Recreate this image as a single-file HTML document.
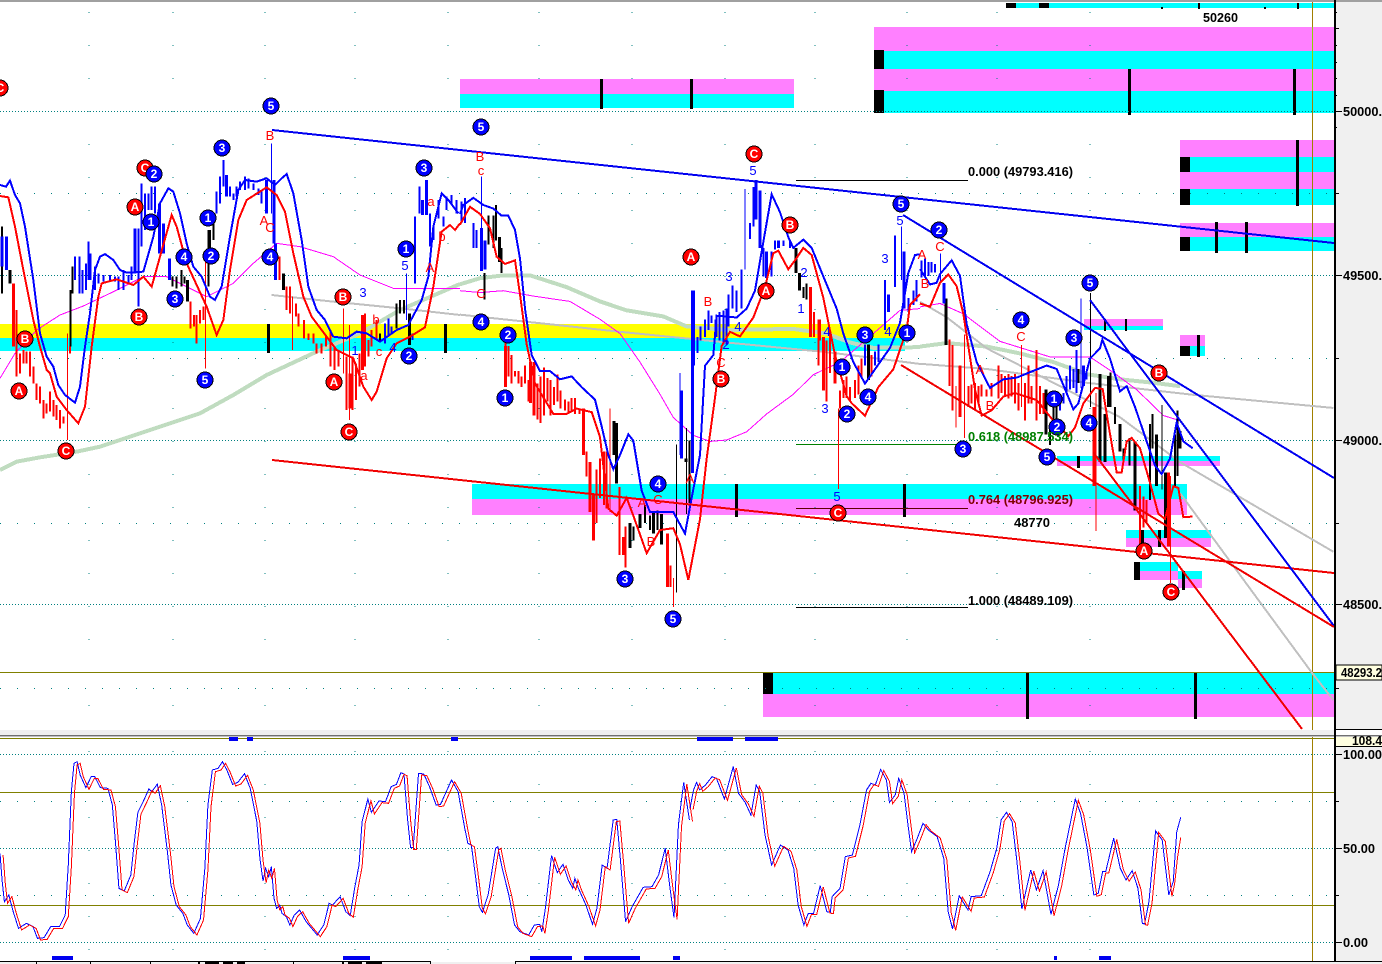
<!DOCTYPE html>
<html>
<head>
<meta charset="utf-8">
<style>
html,body{margin:0;padding:0;background:#fff;width:1382px;height:964px;overflow:hidden}
svg{display:block;position:absolute;left:0;top:0}
text{font-family:"Liberation Sans",sans-serif;font-weight:bold;font-size:13px}
.w text{fill:#fff;font-size:12px;text-anchor:middle}
.r circle{fill:#f00;stroke:#000;stroke-width:1}
.b circle{fill:#00f;stroke:#000;stroke-width:1}
.ls text{text-anchor:middle;font-size:13px;font-weight:normal}
.ns *{vector-effect:non-scaling-stroke;fill:none}
polyline.sl{vector-effect:non-scaling-stroke;fill:none}
</style>
</head>
<body>
<svg width="1382" height="964" viewBox="0 0 1382 964" shape-rendering="crispEdges">
<defs>
<polyline id="s1" class="sl" points="0,385 5,470 10,530 20,510 30,560 42,610 60,595 75,605 85,640 100,638 115,605 135,605 148,570 155,420 162,200 168,115 175,110 182,150 195,188 207,155 215,155 228,188 245,190 255,240 262,350 270,490 282,498 297,450 305,350 313,262 325,230 338,192 345,200 357,177 367,240 380,380 388,480 400,540 415,565 425,600 440,625 455,580 465,430 472,240 482,135 495,130 505,110 515,135 528,178 540,172 555,146 568,190 583,290 590,400 597,468 603,430 610,455 616,425 622,520 628,550 635,540 640,565 650,575 658,600 668,570 680,555 695,590 720,630 735,600 747,535 755,540 772,515 785,560 795,572 805,490 815,420 822,290 835,222 843,262 860,228 875,230 888,185 900,178 910,143 917,147 925,280 932,368 938,368 950,145 962,147 975,185 990,240 1000,238 1025,165 1040,200 1055,310 1062,355 1070,360 1080,460 1088,545 1095,562 1108,510 1125,370 1130,365 1140,430 1155,510 1168,600 1180,620 1200,630 1213,600 1225,598 1230,620 1238,550 1252,392 1265,443 1278,418 1290,465 1300,490 1305,460 1313,490 1330,540 1345,598 1355,550 1367,420 1378,430 1392,285 1400,283 1408,400 1420,590 1435,545 1460,487 1480,485 1495,450 1510,370 1520,480 1530,578 1540,300 1552,172 1565,285"/>
<polyline id="s2" class="sl" points="0,250 8,195 15,172 22,195 35,180 50,155 60,160 78,222 98,125 110,205 125,232 138,270 150,180 158,200 170,330 185,420 205,360 222,375 235,430 245,540 258,600 268,565 280,565 295,482 310,560 318,562 322,515 340,490 352,395 368,390 385,300 400,195 410,175 420,180 432,133 445,165 452,232 465,210 473,160 485,205 495,310 502,380 515,340 528,295 540,315 560,335 575,400 585,560 595,612 610,512 630,555 637,515 660,512 680,440 695,370 705,285 717,262 730,290 740,400 752,552 772,435 785,495 800,437 818,568 835,480 850,370 873,222 885,265 900,370 915,510 925,505 935,440 942,440 960,340 975,430 988,465 1002,437 1015,490 1025,595 1030,597 1040,530 1055,318 1070,345 1085,510"/>
</defs>

<!-- axis column -->
<rect x="1335" y="0" width="47" height="964" fill="#f0f0f0"/>

<!-- bands -->
<g>
<rect x="1006" y="3" width="328" height="5" fill="#0ff"/>
<rect x="1006" y="3" width="10" height="5" fill="#000"/><rect x="1039" y="3" width="10" height="5" fill="#000"/>
<rect x="1198" y="3" width="2" height="6" fill="#000"/><rect x="1297" y="3" width="2" height="6" fill="#000"/>
<rect x="1161" y="7" width="2" height="2" fill="#000"/><rect x="1264" y="7" width="2" height="2" fill="#000"/>

<rect x="874" y="27" width="460" height="24" fill="#ff80ff"/>
<rect x="874" y="51" width="460" height="18" fill="#0ff"/>
<rect x="874" y="69" width="460" height="22" fill="#ff80ff"/>
<rect x="874" y="91" width="460" height="22" fill="#0ff"/>
<rect x="874" y="50" width="10" height="19" fill="#000"/><rect x="874" y="90" width="10" height="23" fill="#000"/>
<rect x="1128" y="69" width="3" height="46" fill="#000"/><rect x="1293" y="69" width="3" height="46" fill="#000"/>

<rect x="460" y="79" width="334" height="15" fill="#ff80ff"/>
<rect x="460" y="94" width="334" height="14" fill="#0ff"/>
<rect x="600" y="79" width="3" height="30" fill="#000"/><rect x="690" y="79" width="3" height="30" fill="#000"/>

<rect x="1180" y="140" width="154" height="17" fill="#ff80ff"/>
<rect x="1180" y="157" width="154" height="15" fill="#0ff"/>
<rect x="1180" y="172" width="154" height="17" fill="#ff80ff"/>
<rect x="1180" y="189" width="154" height="16" fill="#0ff"/>
<rect x="1180" y="157" width="10" height="15" fill="#000"/><rect x="1180" y="189" width="10" height="16" fill="#000"/>
<rect x="1296" y="140" width="3" height="66" fill="#000"/>

<rect x="1180" y="223" width="154" height="14" fill="#ff80ff"/>
<rect x="1180" y="237" width="154" height="14" fill="#0ff"/>
<rect x="1180" y="237" width="10" height="14" fill="#000"/>
<rect x="1215" y="222" width="3" height="31" fill="#000"/><rect x="1245" y="222" width="3" height="31" fill="#000"/>

<rect x="0" y="324" width="905" height="14" fill="#ff0"/>
<rect x="0" y="338" width="905" height="13" fill="#0ff"/>
<rect x="267" y="324" width="3" height="29" fill="#000"/><rect x="444" y="324" width="3" height="29" fill="#000"/>

<rect x="1084" y="319" width="79" height="7" fill="#ff80ff"/>
<rect x="1084" y="326" width="79" height="4" fill="#0ff"/>
<rect x="1104" y="319" width="2" height="12" fill="#000"/><rect x="1125" y="319" width="2" height="12" fill="#000"/>

<rect x="1180" y="335" width="25" height="11" fill="#ff80ff"/>
<rect x="1180" y="346" width="25" height="10" fill="#0ff"/>
<rect x="1180" y="346" width="10" height="10" fill="#000"/>
<rect x="1197" y="335" width="3" height="22" fill="#000"/>

<rect x="472" y="484" width="715" height="15" fill="#0ff"/>
<rect x="472" y="499" width="715" height="16" fill="#ff80ff"/>
<rect x="735" y="484" width="3" height="33" fill="#000"/><rect x="903" y="484" width="3" height="33" fill="#000"/>

<rect x="1057" y="456" width="163" height="5" fill="#0ff"/>
<rect x="1057" y="461" width="163" height="5" fill="#ff80ff"/>
<rect x="1077" y="456" width="3" height="12" fill="#000"/>

<rect x="1126" y="530" width="85" height="8" fill="#0ff"/>
<rect x="1126" y="538" width="85" height="9" fill="#ff80ff"/>
<rect x="1141" y="530" width="3" height="17" fill="#000"/><rect x="1158" y="530" width="3" height="17" fill="#000"/>

<rect x="1137" y="562" width="41" height="9" fill="#0ff"/>
<rect x="1137" y="571" width="41" height="9" fill="#ff80ff"/>
<rect x="1178" y="571" width="24" height="8" fill="#0ff"/>
<rect x="1178" y="579" width="24" height="9" fill="#ff80ff"/>
<rect x="1134" y="562" width="6" height="18" fill="#000"/>
<rect x="1182" y="571" width="3" height="19" fill="#000"/>

<rect x="763" y="673" width="571" height="21" fill="#0ff"/>
<rect x="763" y="694" width="571" height="23" fill="#ff80ff"/>
<rect x="763" y="673" width="10" height="21" fill="#000"/>
<rect x="1026" y="673" width="3" height="46" fill="#000"/><rect x="1194" y="673" width="3" height="46" fill="#000"/>
</g>

<!-- grid -->
<g stroke="#008080" stroke-width="1" fill="none">
<path stroke-dasharray="1 2" d="M0 111.5H1334M0 275.5H1334M0 440.5H1334M0 604.5H1334M0 754.5H1334M0 848.5H1334M0 942.5H1334"/>
<path stroke-dasharray="1 16" d="M0 193.5H1334M0 358.5H1334M0 523.5H1334M0 688.5H1334M0 801.5H1334M0 895.5H1334"/>
<path stroke-dasharray="1 32" d="M89 12V730M173 12V730M265 12V730M355 12V730M448 12V730M539 12V730M632 12V730M725 12V730M815 12V730M907 12V730M997 12V730M1090 12V730M89 751V955M173 751V955M265 751V955M355 751V955M448 751V955M539 751V955M632 751V955M725 751V955M815 751V955M907 751V955M997 751V955M1090 751V955"/>
</g>

<!-- olive lines -->
<g fill="#808000">
<rect x="0" y="672" width="1334" height="1"/>
<rect x="0" y="738" width="1334" height="1"/>
<rect x="0" y="792" width="1334" height="1"/>
<rect x="0" y="905" width="1334" height="1"/>
<rect x="1312" y="0" width="1" height="961" fill="#a08000"/>
<rect x="1312" y="27" width="1" height="64" fill="#90d000"/>
</g>

<!-- fib lines -->
<g fill="none" stroke-width="1">
<path stroke="#000" d="M796 180.5H968M796 607.5H968"/>
<path stroke="#008000" d="M796 444.5H963"/>
<path stroke="#600000" d="M796 508.5H968"/>
</g>

<!-- ZOOM 1 segment -->
<g transform="translate(0,80) scale(0.33333,0.33333)" class="ns">
<polyline stroke="#c0dcc0" stroke-width="4" points="0,1170 50,1145 120,1132 230,1115 300,1100 450,1050 600,1000 700,945 800,885 950,815 1080,760 1200,690 1380,612"/>
<polyline stroke="#c0c0c0" stroke-width="2" points="815,645 1000,665 1200,685 1380,705"/>
<polyline stroke="#ff00ff" stroke-width="1" points="0,895 45,820 110,750 180,705 250,678 330,640 430,590 500,590 560,620 620,650 700,610 760,550 830,490 900,500 1000,530 1080,585 1180,625 1380,625"/>
<path stroke="#000" stroke-width="2" d="M6 440V640M212 630V800M218 560V640M518 590V620M530 590V625M545 570V620M553 590V610M625 450V620M630 450V530M640 410V480M1140 760V785M1190 670V745M1200 660V700M1212 660V700"/>
<path stroke="#000" stroke-width="3" d="M30 570V610M562 600V665M850 580V630M1228 700V795"/>
<path stroke="#00f" stroke-width="2" d="M225 530V600M238 530V640M248 570V640M258 550V630M265 485V600M272 520V600M285 560V630M295 580V610M310 585V605M330 585V605M345 590V605M355 590V630M370 570V630M385 585V610M395 560V600M415 445V680M425 310V500M435 340V450M445 340V390M455 320V390M465 320V400M650 335V400M660 290V370M670 240V320M690 320V350M700 340V360M710 320V350M720 305V330M735 290V330M745 295V325M760 310V330M775 325V345M785 330V370M1155 730V790M1165 715V770M1175 740V760M1238 760V780M1245 410V610M1258 320V400M1290 400V500M1300 440V480M1315 360V415M1330 410V440M1340 350V390M1355 345V375M1370 360V400"/>
<path stroke="#00f" stroke-width="1" d="M815 190V400M1219 580V720"/>
<path stroke="#00f" stroke-width="3" d="M6 470V560M20 470V570M405 445V580M478 370V520M490 430V520M508 535V600M680 285V350M800 300V400M822 300V490M826 490V600M1268 360V405M1280 300V405"/>
<path stroke="#f00" stroke-width="2" d="M50 690V890M60 820V880M70 810V850M80 815V850M90 815V890M100 860V910M110 910V960M120 920V970M130 960V1015M140 970V1000M150 935V995M160 960V1010M170 975V1020M180 990V1045M190 1010V1030M210 800V820M572 665V745M582 705V740M590 705V790M600 690V730M610 680V720M838 530V600M860 620V690M870 620V700M888 670V710M895 700V740M912 720V775M925 760V780M940 760V790M950 790V820M965 790V820M978 770V800M992 750V860M1003 800V870M1015 810V860M1040 830V990M1058 830V990M1068 850V960M1078 820V920M1095 700V860M1105 780V830M1115 750V800M1130 720V780"/>
<path stroke="#f00" stroke-width="1" d="M203 760V1080M617 540V865M878 650V810M1030 685V880M1048 735V1020"/>
<path stroke="#f00" stroke-width="3" d="M40 610V800M1088 705V870M1050 880V985"/>
<polyline stroke="#00f" stroke-width="2" points="0,315 18,320 30,302 45,345 60,370 75,440 100,600 120,760 140,830 160,860 175,915 195,945 225,968 240,920 255,800 270,700 285,570 300,530 315,522 340,540 360,570 380,578 430,575 460,470 480,370 505,325 520,335 540,400 560,490 580,560 605,590 630,650 645,660 665,620 690,470 715,330 735,300 770,305 800,295 825,315 845,295 860,282 880,340 905,480 925,620 950,690 975,720 1000,770 1040,775 1070,755 1100,760 1140,785 1190,750 1225,735 1265,660 1285,590 1300,440 1325,340 1345,360 1375,400"/>
<polyline stroke="#f00" stroke-width="2" points="0,348 25,352 45,440 70,570 100,720 120,800 140,870 150,880 170,950 200,990 235,1030 255,980 275,800 295,650 305,610 350,598 400,615 430,590 455,620 480,530 515,405 530,440 560,550 590,615 620,680 650,765 670,720 690,570 715,420 740,360 800,322 830,345 855,395 880,520 910,650 935,710 980,770 1010,810 1060,835 1090,920 1115,960 1130,935 1160,835 1190,790 1230,770 1275,742 1300,620 1325,455 1350,435 1365,450 1380,430"/>
</g>

<!-- ZOOM 2 segment -->
<g transform="translate(460,80) scale(0.33333,0.35714)" class="ns">
<polyline stroke="#c0dcc0" stroke-width="4" points="0,572 60,555 130,547 210,547 320,580 420,620 500,645 610,662 680,690 800,700 1000,697 1100,710 1170,735 1240,750 1380,748"/>
<polyline stroke="#c0c0c0" stroke-width="2" points="0,657 180,675 480,705 800,735 1100,762 1380,795"/>
<polyline stroke="#ff00ff" stroke-width="1" points="0,590 60,595 130,590 220,605 330,620 420,670 480,710 540,790 600,880 640,945 700,995 750,1012 800,1008 860,985 920,935 1000,880 1060,825 1140,790 1240,710 1320,645 1380,640"/>
<path stroke="#000" stroke-width="2" d="M73 540V615M85 380V460M100 380V470M108 350V450M125 470V540M520 1250V1290M555 1190V1240M570 1220V1260M592 1205V1260M688 1010V1185M1030 580V610M1040 570V615"/>
<path stroke="#000" stroke-width="1" d="M650 1020V1435M680 975V1215"/>
<path stroke="#000" stroke-width="3" d="M118 440V510M462 955V1050M470 960V1130M510 1240V1310M540 1215V1255M580 1210V1270M605 1215V1300M678 1060V1070M1008 470V540M1018 540V590M1225 740V840"/>
<path stroke="#00f" stroke-width="2" d="M5 340V400M15 330V400M40 400V470M50 420V470M702 590V800M712 720V765M722 690V730M735 670V720M745 645V700M755 660V680M778 650V730M790 645V740M800 640V740M805 600V690M818 575V640M830 590V650M845 530V640M870 400V445M880 300V410M910 470V550M935 480V550M945 450V475M970 450V465M990 450V470M1215 740V800M1245 760V800M1255 740V790M1275 560V700M1305 435V580M1345 610V650M1360 590V630M1370 560V620"/>
<path stroke="#00f" stroke-width="1" d="M65 270V535M660 820V1050M855 305V530M1325 410V560"/>
<path stroke="#00f" stroke-width="3" d="M65 415V535M75 450V530M665 870V1060M697 590V1100M768 670V720M888 280V390M900 310V470M920 480V555M955 450V470M1285 600V650M1332 480V640"/>
<path stroke="#f00" stroke-width="2" d="M137 720V860M145 745V830M155 770V850M165 815V830M175 815V850M185 830V860M195 800V850M205 840V900M232 850V950M242 830V960M252 805V940M262 835V900M272 840V940M282 860V910M292 825V900M302 870V920M315 895V925M325 900V930M335 890V925M345 890V935M358 920V935M380 1040V1110M410 1090V1240M420 1060V1170M432 1040V1190M440 1040V1200M478 1140V1330M497 1250V1365M632 1360V1420M1062 650V720M1075 670V800M1080 670V730M1100 730V900M1110 700V820M1140 870V920M1150 840V890M1160 830V890M1170 860V900M1185 840V890M1195 800V880M1205 780V830M1235 770V830"/>
<path stroke="#f00" stroke-width="1" d="M450 920V1210M640 1395V1475M1135 920V1145"/>
<path stroke="#f00" stroke-width="3" d="M137 745V860M212 790V905M222 790V940M370 920V1050M390 1070V1210M400 1160V1290M490 1280V1330M622 1270V1420M1052 580V720M1090 720V870M1125 760V850"/>
<polyline stroke="#00f" stroke-width="2" points="0,375 10,350 40,330 70,350 100,360 125,380 145,380 165,420 180,500 195,640 215,770 240,815 270,815 300,838 335,830 365,860 405,895 425,970 445,1050 460,1090 480,1050 505,992 520,1010 545,1150 570,1210 610,1210 640,1210 675,1270 695,1170 720,1050 735,800 760,770 770,660 830,665 860,640 885,590 905,480 935,320 960,370 985,440 1000,470 1030,447 1055,470 1090,550 1130,640 1150,710 1180,790 1215,850 1290,750 1320,680 1345,540 1365,490 1380,488"/>
<polyline stroke="#f00" stroke-width="2" points="0,405 30,355 60,375 90,415 110,495 135,515 165,505 180,600 200,740 225,850 280,935 320,935 350,920 395,930 420,1000 445,1200 470,1220 500,1170 520,1220 560,1325 600,1260 640,1255 660,1300 685,1400 720,1230 740,1060 765,890 785,745 810,705 840,718 880,665 915,580 940,485 955,478 985,530 1005,505 1030,470 1055,490 1090,610 1125,770 1160,885 1175,905 1215,940 1255,860 1300,810 1340,700 1350,630 1380,600"/>
</g>

<!-- ZOOM 3 segment -->
<g transform="translate(920,200) scale(0.33333,0.34483)" class="ns">
<polyline stroke="#c0dcc0" stroke-width="4" points="0,425 80,415 200,425 300,445 400,470 500,505 600,520 700,530 780,540"/>
<polyline stroke="#c0c0c0" stroke-width="2" points="0,475 200,490 500,530 820,565 1240,603"/>
<polyline stroke="#c0c0c0" stroke-width="2" points="0,295 80,340 200,430 420,540 600,630 780,760 1240,1020"/>
<polyline stroke="#c0c0c0" stroke-width="2" points="780,850 1000,1140 1175,1370 1240,1450"/>
<polyline stroke="#ff00ff" stroke-width="1" points="0,310 60,300 130,330 240,410 390,455 510,455 580,500 650,550 730,625 780,640"/>
<path stroke="#000" stroke-width="2" d="M390 650V710M400 590V680M410 580V660M475 490V530M572 500V600M585 600V650M610 720V760M628 690V770M690 650V870M698 620V720M765 680V830M773 610V800"/>
<path stroke="#000" stroke-width="1" d="M512 270V600M726 595V840"/>
<path stroke="#000" stroke-width="3" d="M78 285V420M378 550V680M540 505V760M555 620V760M565 510V600M600 650V730M645 700V900M710 680V830M736 790V980M780 670V720"/>
<path stroke="#00f" stroke-width="2" d="M5 175V225M15 170V220M25 180V220M35 180V210M45 185V210M420 580V610M430 560V590M440 510V560M450 480V550M460 490V545M470 435V560M500 500V520"/>
<path stroke="#00f" stroke-width="1" d="M62 155V240M483 285V545"/>
<path stroke="#00f" stroke-width="3" d="M72 240V300M490 480V540"/>
<path stroke="#f00" stroke-width="2" d="M88 405V540M98 420V610M145 540V600M155 535V590M165 530V610M175 540V590M185 535V570M200 550V570M215 530V570M235 480V575M245 505V560M255 510V570M265 505V575M275 510V570M285 505V590M295 530V610M315 530V640M325 480V590M335 540V590M350 435V640M360 540V620M370 560V620M660 830V1000M670 860V950M680 870V935"/>
<path stroke="#f00" stroke-width="1" d="M108 540V660M133 390V690M305 420V600M528 560V960M752 800V1110"/>
<path stroke="#f00" stroke-width="3" d="M120 480V630M522 600V830M745 790V1005"/>
<polyline stroke="#00f" stroke-width="2" points="0,200 30,245 50,240 60,215 95,175 120,220 140,360 170,470 210,545 250,520 290,515 380,480 410,490 440,560 460,607 475,590 510,460 540,430 547,405 570,460 600,555 620,540 645,600 680,700 705,770 725,795 750,750 770,645 790,700 818,720"/>
<polyline stroke="#f00" stroke-width="2" points="0,300 30,310 60,240 85,216 110,250 130,330 165,550 185,625 215,610 250,570 285,560 350,580 400,640 445,685 465,660 490,590 525,545 548,548 565,650 590,790 605,790 620,700 635,690 660,720 690,820 715,910 735,925 760,830 775,835 790,920 818,918"/>
</g>

<!-- trend lines -->
<g fill="none" stroke-width="2">
<path stroke="#0000f0" d="M272 130L1334 243"/>
<path stroke="#f00000" d="M272 460L1334 573"/>
<path stroke="#0000f0" d="M903 215L1334 478"/>
<path stroke="#0000f0" d="M1090 300L1334 626"/>
<path stroke="#f00000" d="M901 365L1334 627"/>
<path stroke="#f00000" d="M1093 452L1302 729"/>
</g>

<!-- stochastic -->
<g transform="translate(0,725) scale(0.44053,0.33333)">
<use href="#s1" stroke="#00f" stroke-width="1"/>
<use href="#s1" transform="translate(7,5)" stroke="#f00" stroke-width="1"/>
</g>
<g transform="translate(690,725) scale(0.44131,0.33333)">
<use href="#s2" stroke="#00f" stroke-width="1"/>
<polyline class="sl" stroke="#00f" stroke-width="1" points="1085,510 1095,470 1103,320 1112,277"/>
<use href="#s2" transform="translate(7,4)" stroke="#f00" stroke-width="1"/>
<polyline class="sl" stroke="#f00" stroke-width="1" points="1092,514 1098,478 1105,395 1112,337"/>
</g>

<!-- small blue bars -->
<g fill="#0000f0">
<rect x="229" y="737" width="9" height="4"/><rect x="247" y="737" width="6" height="4"/><rect x="451" y="737" width="7" height="4"/><rect x="697" y="737" width="36" height="4"/><rect x="745" y="737" width="33" height="4"/>
<rect x="52" y="956" width="21" height="4"/><rect x="343" y="956" width="27" height="4"/><rect x="530" y="956" width="42" height="4"/><rect x="584" y="956" width="56" height="4"/><rect x="673" y="956" width="7" height="4"/><rect x="1054" y="956" width="3" height="4"/><rect x="1099" y="956" width="12" height="4"/>
</g>

<!-- divider -->
<rect x="0" y="0" width="1382" height="2" fill="#a0a0a0"/>
<rect x="0" y="730" width="1334" height="5" fill="#f0f0f0"/>
<rect x="0" y="735" width="1382" height="1" fill="#707070"/>
<rect x="0" y="736" width="1382" height="1" fill="#c0c0c0"/>

<!-- axis frame -->
<rect x="1334" y="0" width="2" height="964" fill="#000"/>
<rect x="1334" y="729" width="48" height="1" fill="#000"/>
<g fill="#000">
<rect x="1336" y="111" width="6" height="1"/><rect x="1336" y="275" width="6" height="1"/><rect x="1336" y="440" width="6" height="1"/><rect x="1336" y="604" width="6" height="1"/>
<rect x="1336" y="754" width="6" height="1"/><rect x="1336" y="848" width="6" height="1"/><rect x="1336" y="942" width="6" height="1"/>
<rect x="1336" y="28" width="3" height="1"/><rect x="1336" y="193" width="3" height="1"/><rect x="1336" y="358" width="3" height="1"/><rect x="1336" y="523" width="3" height="1"/><rect x="1336" y="688" width="3" height="1"/><rect x="1336" y="801" width="3" height="1"/><rect x="1336" y="895" width="3" height="1"/>
<rect x="1336" y="12" width="1" height="1"/><rect x="1336" y="45" width="1" height="1"/><rect x="1336" y="62" width="1" height="1"/><rect x="1336" y="78" width="1" height="1"/><rect x="1336" y="95" width="1" height="1"/><rect x="1336" y="127" width="1" height="1"/>
</g>
<rect x="1336" y="665" width="46" height="15" fill="#ffffe0" stroke="#000" stroke-width="1"/>
<rect x="1336" y="737" width="46" height="9" fill="#ffffe0"/>
<rect x="1336" y="746" width="46" height="1" fill="#000"/>

<!-- bottom time axis -->
<rect x="0" y="962" width="1382" height="2" fill="#f0f0f0"/>
<g fill="#000">
<rect x="0" y="961" width="430" height="1"/><rect x="515" y="961" width="867" height="1"/>
<rect x="36" y="961" width="1" height="3"/><rect x="90" y="961" width="1" height="3"/><rect x="150" y="961" width="1" height="3"/><rect x="293" y="961" width="1" height="3"/><rect x="430" y="961" width="1" height="3"/><rect x="515" y="961" width="1" height="3"/>
<rect x="198" y="962" width="2" height="2"/><rect x="205" y="962" width="14" height="2"/><rect x="223" y="962" width="10" height="2"/><rect x="237" y="962" width="8" height="2"/>
<rect x="342" y="962" width="2" height="2"/><rect x="348" y="962" width="14" height="2"/><rect x="366" y="962" width="16" height="2"/>
</g>

<!-- red circles -->
<g class="w r">
<g><circle cx="0" cy="88" r="8"/><text x="0" y="92">C</text></g>
<g><circle cx="19" cy="391" r="8"/><text x="19" y="395">A</text></g>
<g><circle cx="25" cy="339" r="8"/><text x="25" y="343">B</text></g>
<g><circle cx="66" cy="451" r="8"/><text x="66" y="455">C</text></g>
<g><circle cx="139" cy="317" r="8"/><text x="139" y="321">B</text></g>
<g><circle cx="135" cy="207" r="8"/><text x="135" y="211">A</text></g>
<g><circle cx="145" cy="168" r="8"/><text x="145" y="172">C</text></g>
<g><circle cx="343" cy="297" r="8"/><text x="343" y="301">B</text></g>
<g><circle cx="334" cy="382" r="8"/><text x="334" y="386">A</text></g>
<g><circle cx="349" cy="432" r="8"/><text x="349" y="436">C</text></g>
<g><circle cx="691" cy="257" r="8"/><text x="691" y="261">A</text></g>
<g><circle cx="754" cy="154" r="8"/><text x="754" y="158">C</text></g>
<g><circle cx="721" cy="379" r="8"/><text x="721" y="383">B</text></g>
<g><circle cx="790" cy="225" r="8"/><text x="790" y="229">B</text></g>
<g><circle cx="766" cy="291" r="8"/><text x="766" y="295">A</text></g>
<g><circle cx="838" cy="513" r="8"/><text x="838" y="517">C</text></g>
<g><circle cx="1159" cy="373" r="8"/><text x="1159" y="377">B</text></g>
<g><circle cx="1144" cy="551" r="8"/><text x="1144" y="555">A</text></g>
<g><circle cx="1171" cy="592" r="8"/><text x="1171" y="596">C</text></g>
</g>

<!-- blue circles -->
<g class="w b">
<g><circle cx="154" cy="174" r="8"/><text x="154" y="178">2</text></g>
<g><circle cx="151" cy="222" r="8"/><text x="151" y="226">1</text></g>
<g><circle cx="222" cy="148" r="8"/><text x="222" y="152">3</text></g>
<g><circle cx="184" cy="257" r="8"/><text x="184" y="261">4</text></g>
<g><circle cx="175" cy="299" r="8"/><text x="175" y="303">3</text></g>
<g><circle cx="208" cy="218" r="8"/><text x="208" y="222">1</text></g>
<g><circle cx="211" cy="256" r="8"/><text x="211" y="260">2</text></g>
<g><circle cx="205" cy="380" r="8"/><text x="205" y="384">5</text></g>
<g><circle cx="271" cy="106" r="8"/><text x="271" y="110">5</text></g>
<g><circle cx="270" cy="257" r="8"/><text x="270" y="261">4</text></g>
<g><circle cx="409" cy="356" r="8"/><text x="409" y="360">2</text></g>
<g><circle cx="406" cy="249" r="8"/><text x="406" y="253">1</text></g>
<g><circle cx="424" cy="168" r="8"/><text x="424" y="172">3</text></g>
<g><circle cx="481" cy="127" r="8"/><text x="481" y="131">5</text></g>
<g><circle cx="481" cy="322" r="8"/><text x="481" y="326">4</text></g>
<g><circle cx="508" cy="335" r="8"/><text x="508" y="339">2</text></g>
<g><circle cx="505" cy="398" r="8"/><text x="505" y="402">1</text></g>
<g><circle cx="625" cy="579" r="8"/><text x="625" y="583">3</text></g>
<g><circle cx="673" cy="619" r="8"/><text x="673" y="623">5</text></g>
<g><circle cx="658" cy="484" r="8"/><text x="658" y="488">4</text></g>
<g><circle cx="842" cy="367" r="8"/><text x="842" y="371">1</text></g>
<g><circle cx="847" cy="414" r="8"/><text x="847" y="418">2</text></g>
<g><circle cx="865" cy="335" r="8"/><text x="865" y="339">3</text></g>
<g><circle cx="868" cy="397" r="8"/><text x="868" y="401">4</text></g>
<g><circle cx="907" cy="333" r="8"/><text x="907" y="337">1</text></g>
<g><circle cx="901" cy="204" r="8"/><text x="901" y="208">5</text></g>
<g><circle cx="939" cy="230" r="8"/><text x="939" y="234">2</text></g>
<g><circle cx="1090" cy="283" r="8"/><text x="1090" y="287">5</text></g>
<g><circle cx="1021" cy="320" r="8"/><text x="1021" y="324">4</text></g>
<g><circle cx="1074" cy="338" r="8"/><text x="1074" y="342">3</text></g>
<g><circle cx="1054" cy="399" r="8"/><text x="1054" y="403">1</text></g>
<g><circle cx="1057" cy="427" r="8"/><text x="1057" y="431">2</text></g>
<g><circle cx="1089" cy="423" r="8"/><text x="1089" y="427">4</text></g>
<g><circle cx="963" cy="449" r="8"/><text x="963" y="453">3</text></g>
<g><circle cx="1047" cy="457" r="8"/><text x="1047" y="461">5</text></g>
</g>

<!-- small wave labels -->
<g class="ls" fill="#f00">
<text x="270" y="140">B</text><text x="264" y="225">A</text><text x="270" y="232">C</text>
<text x="376" y="324">b</text><text x="364" y="380">a</text><text x="379" y="356">c</text><text x="431" y="206">a</text><text x="442" y="241">b</text><text x="430" y="272">A</text>
<text x="480" y="161">B</text><text x="481" y="175">c</text><text x="481" y="298">C</text><text x="690" y="483">A</text><text x="642" y="507">A</text><text x="658" y="504">C</text><text x="651" y="546">B</text>
<text x="708" y="306">B</text><text x="721" y="367">C</text><text x="922" y="259">A</text><text x="925" y="288">B</text><text x="940" y="251">C</text>
<text x="980" y="374">A</text><text x="990" y="410">B</text><text x="1021" y="341">C</text>
</g>
<g class="ls" fill="#00f">
<text x="405" y="270">5</text><text x="363" y="297">3</text><text x="355" y="355">1</text><text x="393" y="352">4</text>
<text x="753" y="175">5</text><text x="729" y="281">3</text><text x="738" y="331">4</text><text x="726" y="349">2</text><text x="801" y="313">1</text><text x="804" y="277">2</text><text x="827" y="336">4</text><text x="837" y="501">5</text><text x="825" y="413">3</text><text x="885" y="263">3</text><text x="900" y="225">5</text><text x="888" y="336">4</text>
</g>

<!-- fib labels -->
<text x="968" y="176" textLength="105" lengthAdjust="spacingAndGlyphs" fill="#000">0.000 (49793.416)</text>
<text x="968" y="441" textLength="105" lengthAdjust="spacingAndGlyphs" fill="#008000">0.618 (48987.534)</text>
<text x="968" y="504" textLength="105" lengthAdjust="spacingAndGlyphs" fill="#800000">0.764 (48796.925)</text>
<text x="968" y="605" textLength="105" lengthAdjust="spacingAndGlyphs" fill="#000">1.000 (48489.109)</text>
<text x="1014" y="527" textLength="36" lengthAdjust="spacingAndGlyphs" fill="#000">48770</text>
<text x="1203" y="22" textLength="35" lengthAdjust="spacingAndGlyphs" fill="#000">50260</text>

<!-- axis labels -->
<g fill="#000">
<text x="1343" y="116" textLength="39" lengthAdjust="spacingAndGlyphs">50000.</text>
<text x="1343" y="280" textLength="39" lengthAdjust="spacingAndGlyphs">49500.</text>
<text x="1343" y="445" textLength="39" lengthAdjust="spacingAndGlyphs">49000.</text>
<text x="1343" y="609" textLength="39" lengthAdjust="spacingAndGlyphs">48500.</text>
<text x="1341" y="677" textLength="41" lengthAdjust="spacingAndGlyphs">48293.2</text>
<text x="1352" y="745" textLength="30" lengthAdjust="spacingAndGlyphs">108.4</text>
<text x="1343" y="759" textLength="39" lengthAdjust="spacingAndGlyphs">100.00</text>
<text x="1343" y="853" textLength="32" lengthAdjust="spacingAndGlyphs">50.00</text>
<text x="1343" y="947" textLength="25" lengthAdjust="spacingAndGlyphs">0.00</text>
</g>
<rect x="1336" y="730" width="46" height="5" fill="#fff"/>
<rect x="1336" y="735" width="46" height="1" fill="#707070"/>
</svg>
</body>
</html>
